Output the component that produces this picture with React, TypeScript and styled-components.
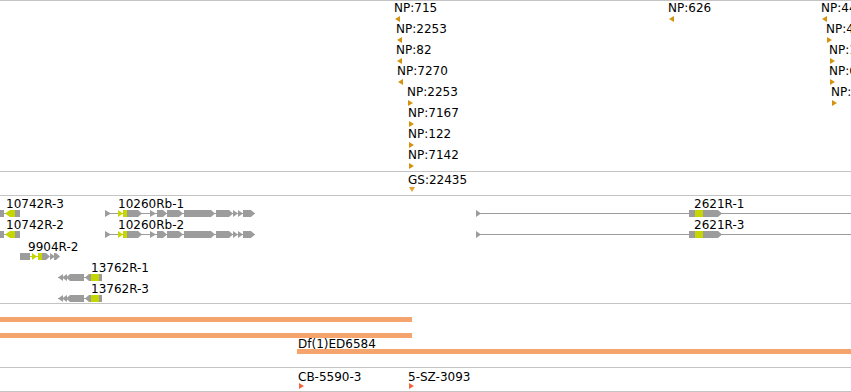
import React from "react";
import styled, { createGlobalStyle } from "styled-components";

const GREY = "#9c9c9c";
const YELLOW = "#c6d600";
const GOLD = "#d4920e";
const RULE = "#c4c4c4";

const GlobalStyle = createGlobalStyle`
  html, body {
    margin: 0;
    padding: 0;
    background: #fff;
  }
  body {
    font-family: "DejaVu Sans", "Liberation Sans", sans-serif;
  }
`;

const Browser = styled.div`
  width: 851px;
  height: 392px;
  display: flex;
  flex-direction: column;
  overflow: hidden;
`;

const Track = styled.div<{ $h: number; $last?: boolean }>`
  position: relative;
  flex: none;
  height: ${(p) => p.$h}px;
  border-top: 1px solid ${RULE};
  border-bottom: ${(p) => (p.$last ? `1px solid ${RULE}` : "none")};
  overflow: hidden;
`;

// features sit on the track canvas at their genomic coordinate
const Feature = styled.div<{ $x: number; $y: number }>`
  position: absolute;
  left: ${(p) => p.$x}px;
  top: ${(p) => p.$y}px;
  display: flex;
  flex-direction: column;
  align-items: flex-start;
`;

const Label = styled.span<{ $dx?: number }>`
  margin-left: ${(p) => p.$dx ?? 0}px;
  font-size: 12px;
  line-height: 14px;
  color: #000;
  white-space: nowrap;
`;

const Glyph = styled.svg<{ $gap: number; $dx?: number }>`
  display: block;
  flex: none;
  margin-top: ${(p) => p.$gap}px;
  margin-left: ${(p) => p.$dx ?? 0}px;
`;

const Bar = styled.div<{ $w: number; $gap?: number }>`
  width: ${(p) => p.$w}px;
  height: 5px;
  margin-top: ${(p) => p.$gap ?? 0}px;
  background: #f4a46c;
`;

type Dir = "left" | "right" | "down";

interface MarkerProps {
  dir: Dir;
  color: string;
  gap: number;
}

const Marker = ({ dir, color, gap }: MarkerProps) => {
  if (dir === "down") {
    return (
      <Glyph $gap={gap} width={6} height={5}>
        <polygon points="0,0 6,0 3,5" fill={color} />
      </Glyph>
    );
  }
  return (
    <Glyph $gap={gap} width={5} height={6}>
      <polygon
        points={dir === "left" ? "5,0 0,3 5,6" : "0,0 5,3 0,6"}
        fill={color}
      />
    </Glyph>
  );
};

interface Point {
  name: string;
  x: number;
  y: number;
  dir: Dir;
}

const Point = ({ name, x, y, dir, color, gap }: Point & { color: string; gap: number }) => (
  <Feature $x={x} $y={y}>
    <Label $dx={-1}>{name}</Label>
    <Marker dir={dir} color={color} gap={gap} />
  </Feature>
);

const row = (i: number) => i * 21;

const insertions: Point[] = [
  { name: "NP:715", x: 395, y: row(0), dir: "left" },
  { name: "NP:2253", x: 397, y: row(1), dir: "left" },
  { name: "NP:82", x: 397, y: row(2), dir: "left" },
  { name: "NP:7270", x: 398, y: row(3), dir: "left" },
  { name: "NP:2253", x: 408, y: row(4), dir: "right" },
  { name: "NP:7167", x: 409, y: row(5), dir: "right" },
  { name: "NP:122", x: 409, y: row(6), dir: "right" },
  { name: "NP:7142", x: 409, y: row(7), dir: "right" },
  { name: "NP:626", x: 669, y: row(0), dir: "left" },
  { name: "NP:4417", x: 822, y: row(0), dir: "left" },
  { name: "NP:4417", x: 827, y: row(1), dir: "right" },
  { name: "NP:1235", x: 830, y: row(2), dir: "right" },
  { name: "NP:6093", x: 830, y: row(3), dir: "right" },
  { name: "NP:3311", x: 832, y: row(4), dir: "right" },
];

type Part = [kind: "line" | "box" | "arrow" | "tri", x: number, w: number, color?: "y"];

interface Gene {
  name: string;
  x: number;
  y: number;
  labelX: number;
  width: number;
  strand: 1 | -1;
  parts: Part[];
}

const shape = (p: Part, strand: number, i: number) => {
  const [kind, x, w, c] = p;
  const fill = c === "y" ? YELLOW : GREY;
  if (kind === "line") {
    return <rect key={i} x={x} y={3} width={w} height={1} fill={c === "y" ? YELLOW : GREY} />;
  }
  if (kind === "box") {
    return <rect key={i} x={x} y={0} width={w} height={7} fill={fill} />;
  }
  const tip = Math.min(4, w);
  let pts: string;
  if (kind === "tri") {
    pts = strand > 0 ? `${x},0 ${x + w},3.5 ${x},7` : `${x + w},0 ${x},3.5 ${x + w},7`;
  } else {
    pts =
      strand > 0
        ? `${x},0 ${x + w - tip},0 ${x + w},3.5 ${x + w - tip},7 ${x},7`
        : `${x},3.5 ${x + tip},0 ${x + w},0 ${x + w},7 ${x + tip},7`;
  }
  return <polygon key={i} points={pts} fill={fill} />;
};

const model10742: Part[] = [
  ["line", 0, 20],
  ["box", 0, 4],
  ["tri", 5, 5, "y"],
  ["box", 10, 5, "y"],
  ["box", 15, 5],
];

const model10260: Part[] = [
  ["line", 0, 150],
  ["tri", 0, 6],
  ["tri", 13, 5, "y"],
  ["box", 18, 4, "y"],
  ["arrow", 22, 15],
  ["tri", 45, 6],
  ["arrow", 52, 10],
  ["arrow", 62, 16],
  ["arrow", 79, 31],
  ["arrow", 111, 17],
  ["tri", 128, 5],
  ["tri", 133, 5],
  ["arrow", 138, 12],
];

const model13762: Part[] = [
  ["line", 0, 44],
  ["tri", 0, 5],
  ["tri", 4, 5],
  ["arrow", 8, 18],
  ["arrow", 27, 6],
  ["box", 33, 8, "y"],
  ["box", 41, 3],
];

const model2621: Part[] = [
  ["line", 0, 375],
  ["tri", 0, 5],
  ["box", 213, 6],
  ["box", 219, 8, "y"],
  ["arrow", 227, 19],
];

const genes: Gene[] = [
  { name: "10742R-3", x: 0, y: 1, labelX: 6, width: 20, strand: -1, parts: model10742 },
  { name: "10742R-2", x: 0, y: 22, labelX: 6, width: 20, strand: -1, parts: model10742 },
  {
    name: "9904R-2",
    x: 20,
    y: 44,
    labelX: 28,
    width: 40,
    strand: 1,
    parts: [
      ["box", 0, 10],
      ["line", 10, 8, "y"],
      ["tri", 12, 5, "y"],
      ["box", 18, 4, "y"],
      ["arrow", 22, 8],
      ["tri", 30, 5],
      ["arrow", 34, 6],
    ],
  },
  { name: "13762R-1", x: 58, y: 65, labelX: 91, width: 44, strand: -1, parts: model13762 },
  { name: "13762R-3", x: 58, y: 86, labelX: 91, width: 44, strand: -1, parts: model13762 },
  { name: "10260Rb-1", x: 105, y: 1, labelX: 118, width: 150, strand: 1, parts: model10260 },
  { name: "10260Rb-2", x: 105, y: 22, labelX: 118, width: 150, strand: 1, parts: model10260 },
  { name: "2621R-1", x: 476, y: 1, labelX: 694, width: 375, strand: 1, parts: model2621 },
  { name: "2621R-3", x: 476, y: 22, labelX: 694, width: 375, strand: 1, parts: model2621 },
];

const GeneFeature = ({ gene }: { gene: Gene }) => (
  <Feature $x={gene.x} $y={gene.y}>
    <Label $dx={gene.labelX - gene.x}>{gene.name}</Label>
    <Glyph $gap={-1} width={gene.width} height={7}>
      {gene.parts.map((p, i) => shape(p, gene.strand, i))}
    </Glyph>
  </Feature>
);

const App = () => {
  return (
    <>
      <GlobalStyle />
      <Browser>
        <Track $h={170}>
          {insertions.map((item, i) => (
            <Point key={i} {...item} color={GOLD} gap={1} />
          ))}
        </Track>
        <Track $h={23}>
          <Point name="GS:22435" x={409} y={1} dir="down" color="#e8a232" gap={0} />
        </Track>
        <Track $h={107}>
          {genes.map((g) => (
            <GeneFeature key={g.name} gene={g} />
          ))}
        </Track>
        <Track $h={63}>
          <Feature $x={0} $y={13}>
            <Bar $w={412} />
          </Feature>
          <Feature $x={0} $y={29}>
            <Bar $w={412} />
          </Feature>
          <Feature $x={297} $y={33}>
            <Label $dx={1}>Df(1)ED6584</Label>
            <Bar $w={554} $gap={-2} />
          </Feature>
        </Track>
        <Track $h={23} $last>
          <Point name="CB-5590-3" x={299} y={2} dir="right" color="#f2653f" gap={-1} />
          <Point name="5-SZ-3093" x={409} y={2} dir="right" color="#f2653f" gap={-1} />
        </Track>
      </Browser>
    </>
  );
};

export default App;
